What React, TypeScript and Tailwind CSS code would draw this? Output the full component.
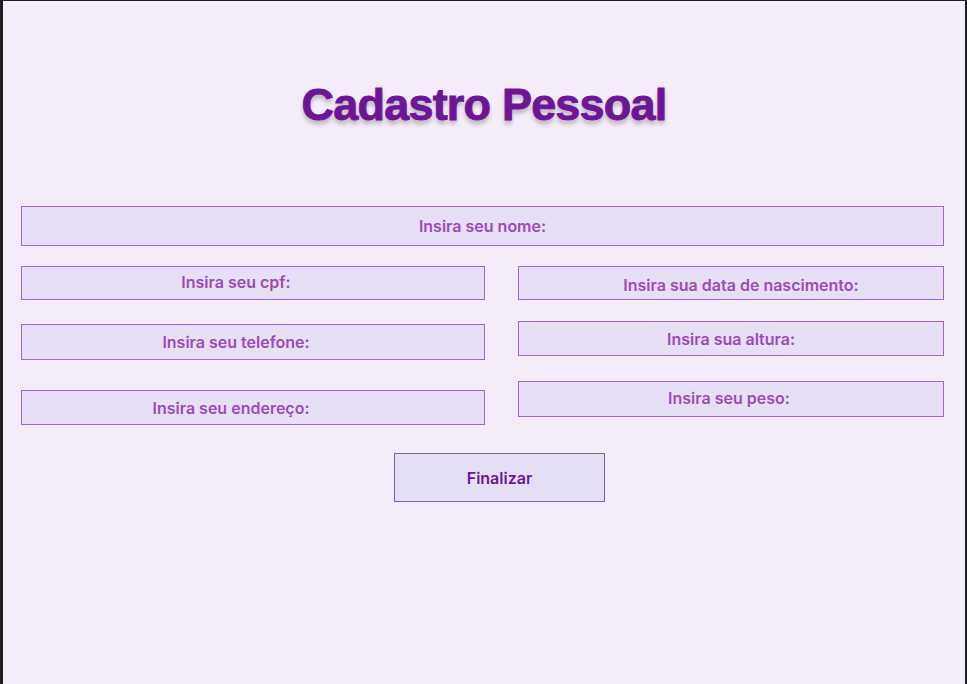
import React from "react";

const field =
  "block w-full border border-[#a565c2] bg-[#e6dff6] text-center text-[16px] font-semibold text-[#9b4cb6] placeholder:text-[#9b4cb6] outline-none";

export default function App() {
  return (
    <div
      className="h-screen w-full overflow-hidden border-t border-l-[3px] border-r-2 border-[#1f1f1f] bg-[#f4ecf9]"
      style={{ fontFamily: "Inter, 'Noto Sans', sans-serif" }}
    >
      {/* Title */}
      <h1
        className="mt-[81px] text-center text-[45px] leading-none font-bold tracking-[-0.8px] text-[#6c1696] [-webkit-text-stroke:0.9px_#6c1696] [text-shadow:0_4px_4px_rgba(0,0,0,0.25)]"
        style={{ fontFamily: "'Liberation Sans', Arial, sans-serif" }}
      >
        Cadastro Pessoal
      </h1>

      <form className="mt-[79px] pl-[18px] pr-[21px]" onSubmit={(e) => e.preventDefault()}>
        <input className={`${field} h-[40px]`} placeholder="Insira seu nome:" />

        <div className="mt-[20px] flex gap-[33px]">
          {/* Left column */}
          <div className="flex w-[464px] flex-col">
            <input className={`${field} h-[34px] pr-[34px] pb-[2px]`} placeholder="Insira seu cpf:" />
            <input className={`${field} mt-[24px] h-[36px] pr-[34px]`} placeholder="Insira seu telefone:" />
            <input className={`${field} mt-[30px] h-[35px] pr-[44px]`} placeholder="Insira seu endereço:" />
          </div>

          {/* Right column */}
          <div className="flex flex-1 flex-col">
            <input className={`${field} h-[34px] pl-[20px] pt-[4px]`} placeholder="Insira sua data de nascimento:" />
            <input className={`${field} mt-[21px] h-[35px]`} placeholder="Insira sua altura:" />
            <input className={`${field} mt-[25px] h-[36px] pb-[2px] pr-[4px]`} placeholder="Insira seu peso:" />
          </div>
        </div>

        <div className="mt-[28px] flex justify-center pl-[34px]">
          <button
            type="submit"
            className="h-[49px] w-[211px] border border-[#716799] bg-[#e5dff6] text-[16px] font-semibold text-[#6c1696]"
          >
            Finalizar
          </button>
        </div>
      </form>
    </div>
  );
}
